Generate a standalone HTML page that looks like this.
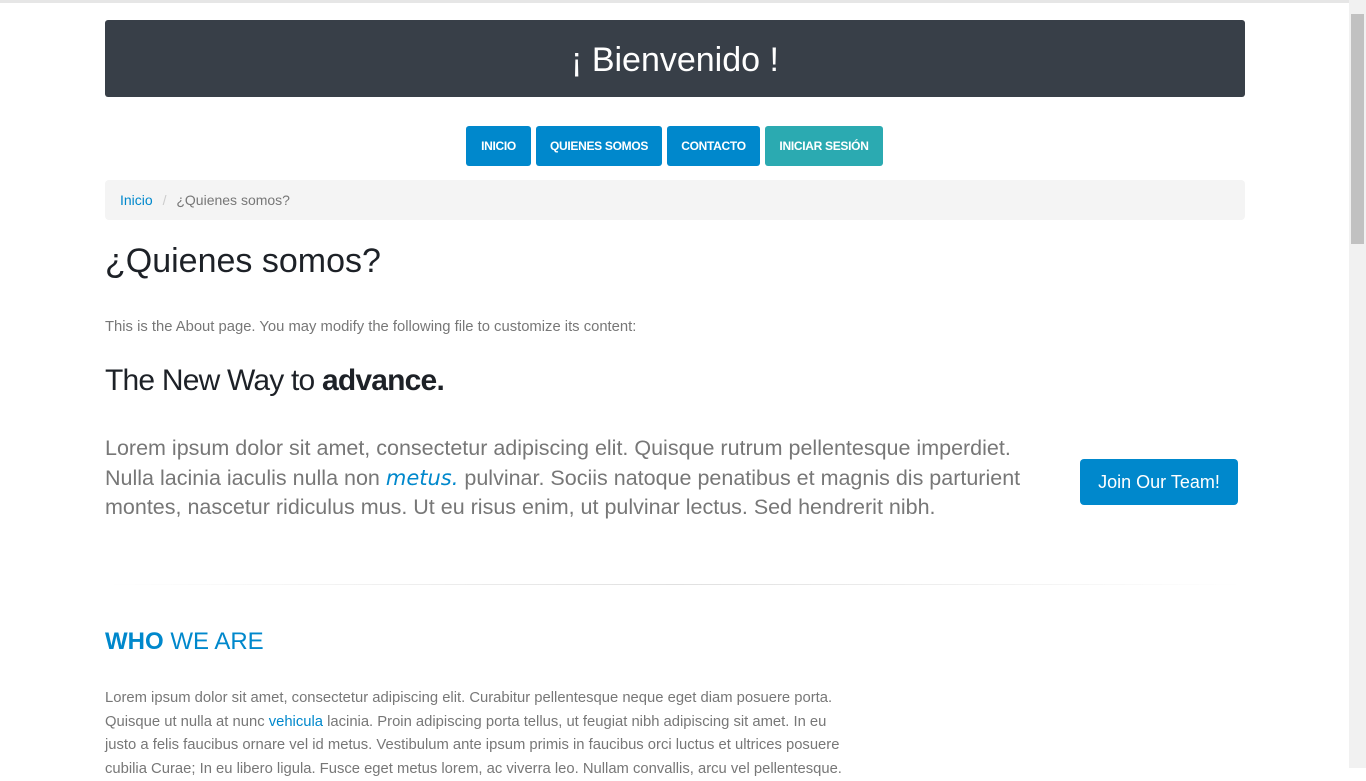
<!DOCTYPE html>
<html><head><meta charset="utf-8"><style>
html,body{margin:0;padding:0}
body{width:1366px;height:768px;overflow:hidden;background:#fff;font-family:"Liberation Sans",sans-serif;color:#777;position:relative}
.topline{position:absolute;left:0;top:0;width:1349px;height:3px;background:#e6e6e6}
.sb{position:absolute;right:0;top:0;width:17px;height:768px;background:#f1f1f1}
.sb .th{position:absolute;left:2px;top:14px;width:13px;height:230px;background:#c1c1c1}
.c{position:absolute;left:105px;width:1140px}
.hdr{top:20px;height:77px;background:#383f48;border-radius:3px;color:#fff;font-size:34px;text-align:center;line-height:80px;font-weight:300}
.nav{top:126px;left:466px}
.nav span{position:absolute;top:0;height:40px;line-height:40px;color:#fff;font-weight:bold;font-size:12px;text-align:center;border-radius:3px;background:#0088cc;letter-spacing:-0.3px}
.bc{top:180px;height:40px;background:#f4f4f4;border-radius:4px;font-size:14px;line-height:40px;padding-left:15px;width:1125px;color:#777}
.bc a{color:#0088cc}
h1{position:absolute;left:105px;top:242px;margin:0;font-weight:300;font-size:34px;color:#1d2127}
.p1{position:absolute;left:105px;top:319px;font-size:14.8px;color:#777}
h2{position:absolute;left:105px;top:364px;margin:0;font-weight:300;font-size:30px;color:#1d2127;letter-spacing:-0.8px}
h2 b{font-weight:bold}
.lead{position:absolute;left:105px;top:434px;width:980px;font-size:21.5px;line-height:29.5px;color:#777;font-weight:300;white-space:nowrap}
.lead i{color:#0088cc;font-family:"DejaVu Sans",cursive;font-style:italic;font-size:21px}
.join{position:absolute;left:1080px;top:459px;width:158px;height:46px;background:#0088cc;color:#fff;border-radius:4px;font-size:18px;line-height:46px;text-align:center}
.hr{position:absolute;left:105px;top:584px;width:1140px;height:1px;background:linear-gradient(90deg,rgba(0,0,0,0),rgba(0,0,0,.12),rgba(0,0,0,0))}
h3{position:absolute;left:105px;top:628px;margin:0;font-size:24px;font-weight:normal;color:#0088cc}
.p2{position:absolute;left:105px;top:687px;width:800px;font-size:14.8px;line-height:23.5px;color:#777;white-space:nowrap}
.p2 a{color:#0088cc}
</style></head><body>
<div class="topline"></div>
<div class="sb"><div class="th"></div></div>
<div class="c hdr">¡ Bienvenido !</div>
<div class="c nav" style="width:420px">
<span style="left:0;width:65px">INICIO</span>
<span style="left:70px;width:126px">QUIENES SOMOS</span>
<span style="left:201px;width:93px">CONTACTO</span>
<span style="left:299px;width:118px;background:#2baab1">INICIAR SESIÓN</span>
</div>
<div class="c bc"><a>Inicio</a> <span style="color:#ccc;padding:0 6px">/</span> ¿Quienes somos?</div>
<h1>¿Quienes somos?</h1>
<div class="p1">This is the About page. You may modify the following file to customize its content:</div>
<h2>The New Way to <b>advance.</b></h2>
<div class="lead">Lorem ipsum dolor sit amet, consectetur adipiscing elit. Quisque rutrum pellentesque imperdiet.<br>Nulla lacinia iaculis nulla non <i>metus.</i> pulvinar. Sociis natoque penatibus et magnis dis parturient<br>montes, nascetur ridiculus mus. Ut eu risus enim, ut pulvinar lectus. Sed hendrerit nibh.</div>
<div class="join">Join Our Team!</div>
<div class="hr"></div>
<h3><b>WHO</b> WE ARE</h3>
<div class="p2">Lorem ipsum dolor sit amet, consectetur adipiscing elit. Curabitur pellentesque neque eget diam posuere porta.<br>Quisque ut nulla at nunc <a>vehicula</a> lacinia. Proin adipiscing porta tellus, ut feugiat nibh adipiscing sit amet. In eu<br>justo a felis faucibus ornare vel id metus. Vestibulum ante ipsum primis in faucibus orci luctus et ultrices posuere<br>cubilia Curae; In eu libero ligula. Fusce eget metus lorem, ac viverra leo. Nullam convallis, arcu vel pellentesque.</div>
</body></html>
